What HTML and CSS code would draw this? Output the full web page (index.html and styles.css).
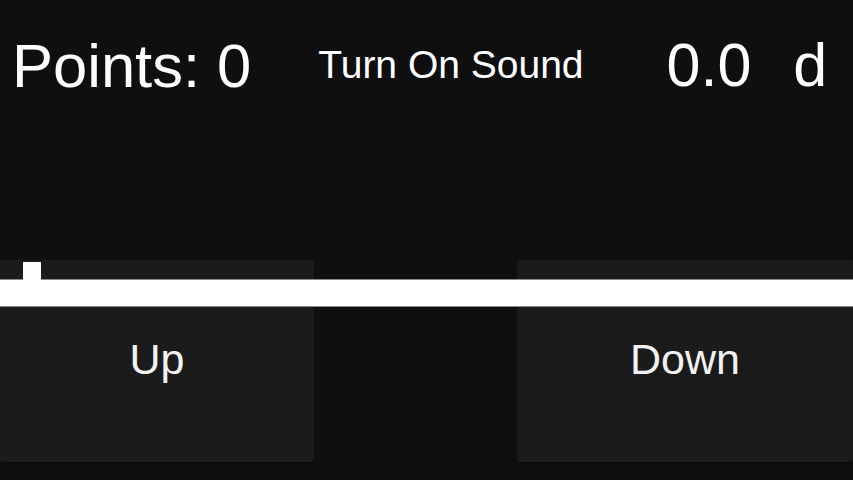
FILE: index.html
```html
<!DOCTYPE html>
<html>
<head>
<meta charset="utf-8">
<link rel="stylesheet" href="styles.css">
</head>
<body>
<div class="screen">
  <header class="hud">
    <div class="points">Points: 0</div>
    <div class="sound">Turn On Sound</div>
    <div class="dist">0.0</div>
    <div class="unit">d</div>
  </header>
  <section class="controls">
    <div class="btn btn-up"><span class="label">Up</span></div>
    <div class="btn btn-down"><span class="label">Down</span></div>
    <div class="track"></div>
    <div class="player"></div>
  </section>
</div>
</body>
</html>
```
FILE: styles.css
```css
html, body {
  margin: 0;
  padding: 0;
  background: #0f0f0f;
}
.screen {
  width: 853px;
  height: 480px;
  background: #0f0f0f;
  color: #ffffff;
  font-family: "Liberation Sans", Arial, sans-serif;
  overflow: hidden;
}
.hud {
  height: 260px;
  display: flex;
  align-items: flex-start;
  box-sizing: border-box;
  padding-left: 12px;
}
.hud > div {
  line-height: 1;
  white-space: nowrap;
}
.points {
  font-size: 61.5px;
  margin-top: 35px;
}
.sound {
  font-size: 39px;
  margin-top: 45px;
  margin-left: 67px;
}
.dist {
  font-size: 61px;
  margin-top: 35px;
  margin-left: 83px;
}
.unit {
  font-size: 61px;
  margin-top: 35px;
  margin-left: 42px;
}
.controls {
  position: relative;
  height: 202px;
  display: flex;
}
.btn {
  background: #1b1b1b;
  display: flex;
  align-items: center;
  justify-content: center;
  border-radius: 2px;
  box-shadow: 0 1px 1px rgba(0, 0, 0, 0.5);
  box-sizing: border-box;
  padding-bottom: 4px;
}
.btn-up {
  width: 314px;
}
.btn-down {
  width: 336px;
  margin-left: auto;
}
.label {
  font-size: 43px;
  line-height: 1;
  color: #f2f2f2;
}
.track {
  position: absolute;
  left: 0;
  right: 0;
  top: 19px;
  height: 26px;
  background: #ffffff;
  border-top: 1px solid #8a8a8a;
  border-bottom: 1px solid #8a8a8a;
}
.player {
  position: absolute;
  left: 23px;
  top: 2px;
  width: 18px;
  height: 18px;
  background: #ffffff;
}
```
